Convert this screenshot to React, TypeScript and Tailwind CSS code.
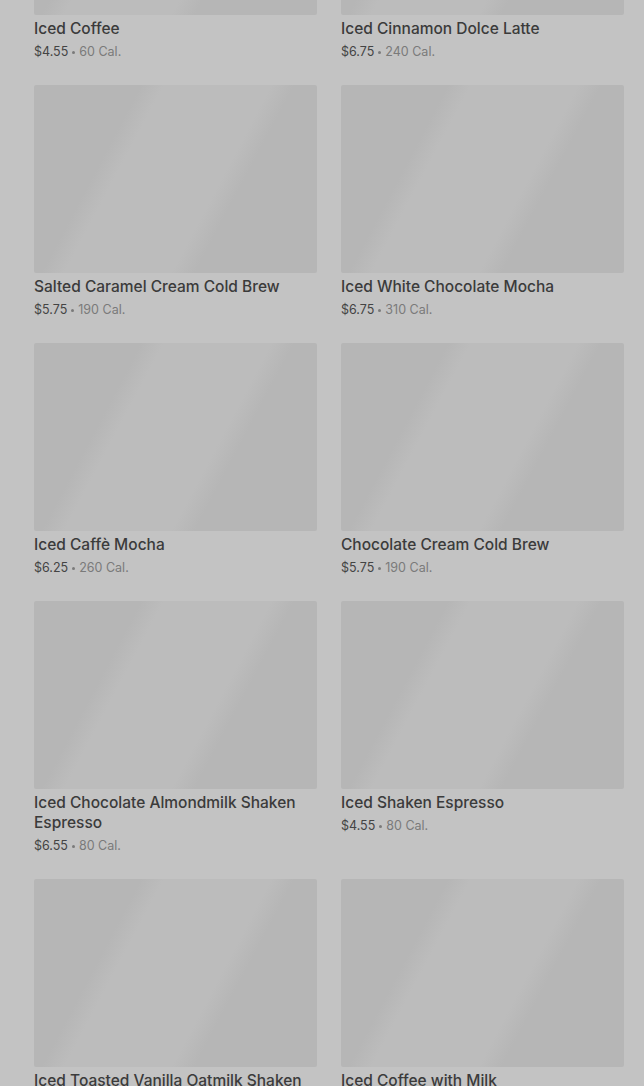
const items = [
  { name: "Iced Coffee", price: "$4.55", cal: "60 Cal." },
  { name: "Iced Cinnamon Dolce Latte", price: "$6.75", cal: "240 Cal." },
  { name: "Salted Caramel Cream Cold Brew", price: "$5.75", cal: "190 Cal." },
  { name: "Iced White Chocolate Mocha", price: "$6.75", cal: "310 Cal." },
  { name: "Iced Caffè Mocha", price: "$6.25", cal: "260 Cal." },
  { name: "Chocolate Cream Cold Brew", price: "$5.75", cal: "190 Cal." },
  { name: "Iced Chocolate Almondmilk Shaken Espresso", price: "$6.55", cal: "80 Cal." },
  { name: "Iced Shaken Espresso", price: "$4.55", cal: "80 Cal." },
  { name: "Iced Toasted Vanilla Oatmilk Shaken Espresso", price: "$6.55", cal: "120 Cal." },
  { name: "Iced Coffee with Milk", price: "$4.55", cal: "80 Cal." },
];

const ProductCard = ({ name, price, cal }: { name: string; price: string; cal: string }) => (
  <div className="flex flex-col">
    <div className="h-[188px] w-full rounded-[2px] bg-[linear-gradient(118deg,#b6b6b6_28%,#bcbcbc_34%,#bcbcbc_62%,#b6b6b6_68%)]" />
    <span className="mt-1 text-[15.5px] leading-5 text-[#3b3b3b] font-medium">{name}</span>
    <span className="mt-1 flex items-center gap-1 text-[12.5px] leading-[18px] text-[#444]">
      {price}
      <span className="inline-block size-[3px] rounded-full bg-[#7a7a7a]" />
      <span className="text-[#7a7a7a]">{cal}</span>
    </span>
  </div>
);

const App = () => {
  return (
    <div className="h-[1086px] w-full overflow-hidden bg-[#c3c3c3] font-['Inter',sans-serif]">
      <div className="pl-[34px] pr-[20px] mt-[-173px] grid grid-cols-2 gap-x-6 gap-y-6">
        {items.map((item) => (
          <ProductCard key={item.name} {...item} />
        ))}
      </div>
    </div>
  );
};

export default App;
